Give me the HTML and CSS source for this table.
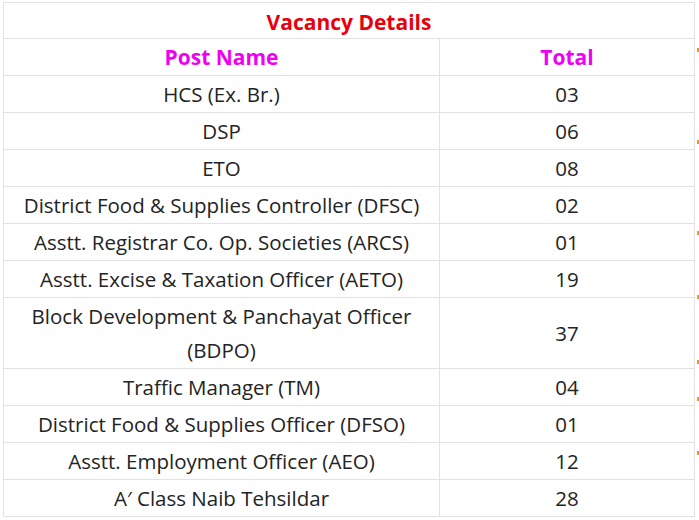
FILE: index.html
```html
<!DOCTYPE html>
<html>
<head>
<meta charset="utf-8">
<link rel="stylesheet" href="styles.css">
</head>
<body>
<div class="page">
  <table class="vacancy">
    <colgroup><col class="col-a"><col class="col-b"></colgroup>
    <tr class="title-row"><th colspan="2">Vacancy Details</th></tr>
    <tr class="head-row"><th>Post Name</th><th>Total</th></tr>
    <tr><td>HCS (Ex. Br.)</td><td>03</td></tr>
    <tr><td>DSP</td><td>06</td></tr>
    <tr><td>ETO</td><td>08</td></tr>
    <tr><td>District Food &amp; Supplies Controller (DFSC)</td><td>02</td></tr>
    <tr><td>Asstt. Registrar Co. Op. Societies (ARCS)</td><td>01</td></tr>
    <tr><td>Asstt. Excise &amp; Taxation Officer (AETO)</td><td>19</td></tr>
    <tr><td>Block Development &amp; Panchayat Officer (BDPO)</td><td>37</td></tr>
    <tr><td>Traffic Manager (TM)</td><td>04</td></tr>
    <tr><td>District Food &amp; Supplies Officer (DFSO)</td><td>01</td></tr>
    <tr><td>Asstt. Employment Officer (AEO)</td><td>12</td></tr>
    <tr><td>A′ Class Naib Tehsildar</td><td>28</td></tr>
  </table>
  <span class="dot d1"></span>
  <span class="dot d2"></span>
  <span class="dot d3"></span>
  <span class="dot d4"></span>
  <span class="dot d5"></span>
  <span class="dot d6"></span>
  <span class="dot d7"></span>
</div>
</body>
</html>
```
FILE: styles.css
```css
html, body {
  margin: 0;
  padding: 0;
  background: #ffffff;
}
.page {
  position: relative;
  padding: 2px 0 0 3px;
  font-family: "Open Sans", "Noto Sans", sans-serif;
}
.vacancy {
  border-collapse: collapse;
  width: 691px;
  table-layout: fixed;
  color: #232323;
}
.col-a { width: 436px; }
.col-b { width: 255px; }
.vacancy th,
.vacancy td {
  border: 1px solid #e2e2e2;
  text-align: center;
  padding: 1px 8px;
  font-size: 20.5px;
  line-height: 34px;
  font-weight: 400;
}
.title-row th {
  color: #e8000b;
  font-weight: 700;
  font-size: 21px;
  padding-top: 3px;
  padding-bottom: 0;
  line-height: 32px;
}
.head-row th {
  color: #f000f0;
  font-weight: 700;
  font-size: 21px;
}
.dot {
  position: absolute;
  left: 697px;
  width: 2px;
  height: 4px;
  background: #e89a2a;
}
.d1 { top: 48px; }
.d2 { top: 140px; }
.d3 { top: 231px; }
.d4 { top: 295px; }
.d5 { top: 360px; }
.d6 { top: 397px; }
.d7 { top: 451px; }
```
